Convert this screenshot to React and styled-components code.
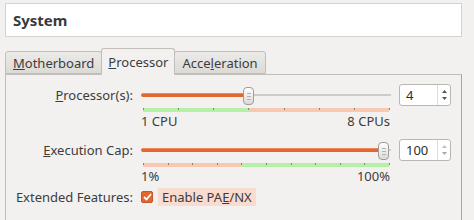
import React from 'react';
import styled, { createGlobalStyle } from 'styled-components';

const GlobalStyle = createGlobalStyle`
    body {
        margin: 0;
        background: #f2f1f0;
        font-family: "Noto Sans", "Open Sans", sans-serif;
        font-size: 13px;
        color: #3c3c3c;
        overflow: hidden;
    }
`;

const Page = styled.div`
    width: 457px;
    padding: 3px 0 0 5px;
`;

const TitleBox = styled.div`
    height: 32px;
    display: flex;
    align-items: center;
    padding-left: 7px;
    background: #ffffff;
    border: 1px solid #d4d2ce;
    font-size: 15px;
    font-weight: bold;
    color: #3a3a3a;
`;

const TabBar = styled.div`
    display: flex;
    align-items: flex-end;
    height: 27px;
    margin-top: 10px;
    position: relative;
    z-index: 1;
`;

const Tab = styled.div`
    height: ${(p) => (p.$active ? '27px' : '23px')};
    display: flex;
    align-items: center;
    padding: 0 ${(p) => (p.$active ? '6px' : '7px')};
    box-sizing: border-box;
    border: 1px solid #c2bfba;
    border-bottom: ${(p) => (p.$active ? '1px solid #f2f1f0' : '1px solid #c2bfba')};
    border-radius: 3px 3px 0 0;
    background: ${(p) => (p.$active ? '#f2f1f0' : 'linear-gradient(#ecebe9, #dcdad6)')};
    margin-right: -1px;
    margin-bottom: ${(p) => (p.$active ? '-1px' : '0')};
    color: #3c3c3c;
`;

const Panel = styled.div`
    border: 1px solid #c2bfba;
    border-right-color: #a9a6a1;
    border-bottom: none;
    height: 147px;
    box-sizing: border-box;
    padding-top: 9px;
    display: grid;
    grid-template-columns: 127px 250px 52px;
    column-gap: 8px;
    align-content: start;
`;

const Label = styled.div`
    text-align: right;
    height: 22px;
    line-height: 22px;
    white-space: nowrap;
`;

const SliderCol = styled.div`
    display: flex;
    flex-direction: column;
    margin-bottom: ${(p) => p.$gap}px;
`;

const TrackRow = styled.div`
    position: relative;
    height: 22px;
    display: flex;
    align-items: center;
`;

const Filled = styled.div`
    height: 3px;
    border-radius: 2px;
    background: #e4662f;
    border-top: 1px solid #ec8a5e;
`;

const Empty = styled.div`
    flex: 1;
    height: 2px;
    background: #cfccc8;
`;

const Handle = styled.div`
    position: absolute;
    top: 3px;
    width: 9px;
    height: 16px;
    margin-left: -5px;
    border: 1px solid #9f9d99;
    border-radius: 4px;
    background: linear-gradient(#ffffff, #dcdad6);
    display: flex;
    flex-direction: column;
    align-items: center;
    justify-content: center;
    gap: 2px;
    & > span {
        width: 4px;
        height: 1px;
        background: #b5b2ad;
    }
`;

const Scale = styled.div`
    position: relative;
    height: 4px;
    margin: 2px 2px 0 2px;
    display: flex;
`;

const ScalePart = styled.div`
    background: ${(p) => (p.$good ? '#b6f0a6' : '#f8c8b3')};
`;

const Tick = styled.div`
    position: absolute;
    top: 0;
    width: 1px;
    height: 2px;
    background: #7d8a72;
`;

const ScaleText = styled.div`
    display: flex;
    justify-content: space-between;
    line-height: 15px;
    margin-top: 2px;
    padding-right: 1px;
`;

const SpinBox = styled.div`
    height: 22px;
    box-sizing: border-box;
    border: 1px solid #bab7b2;
    border-radius: 3px;
    background: #fff;
    display: flex;
`;

const SpinValue = styled.div`
    flex: 1;
    padding-left: 6px;
    line-height: 20px;
    color: #2e2e2e;
`;

const SpinArrows = styled.div`
    width: 13px;
    border-left: 1px solid #dedcd8;
    display: flex;
    flex-direction: column;
    align-items: center;
    justify-content: space-between;
    padding: 5px 0;
    box-sizing: border-box;
    & svg {
        display: block;
    }
`;

const Check = styled.div`
    display: flex;
    align-items: center;
    gap: 5px;
    height: 22px;
`;

const CheckBox = styled.div`
    width: 12px;
    height: 12px;
    border-radius: 2px;
    background: #e4662f;
    border: 1px solid #c9552a;
    box-sizing: border-box;
    display: flex;
    align-items: center;
    justify-content: center;
`;

const CheckText = styled.span`
    background: #f9dbcf;
    padding: 1px 4px;
    line-height: 16px;
    white-space: nowrap;
`;

const Slider = ({ value, ticks, split, greenFirst, min, max, gap }) => {
    const pos = 236 * value + 6;
    return (
        <SliderCol $gap={gap}>
            <TrackRow>
                <Filled style={{ width: pos }} />
                <Empty />
                <Handle style={{ left: pos }}>
                    <span />
                    <span />
                    <span />
                </Handle>
            </TrackRow>
            <Scale>
                <ScalePart $good={greenFirst} style={{ width: `${split * 100}%` }} />
                <ScalePart $good={!greenFirst} style={{ flex: 1 }} />
                {Array.from({ length: ticks }).map((_, i) => (
                    <Tick key={i} style={{ left: `${(i / (ticks - 1)) * 100}%` }} />
                ))}
            </Scale>
            <ScaleText>
                <span>{min}</span>
                <span>{max}</span>
            </ScaleText>
        </SliderCol>
    );
};

const Spin = ({ value, atMax }) => (
    <SpinBox>
        <SpinValue>{value}</SpinValue>
        <SpinArrows>
            <svg width="5" height="3" viewBox="0 0 5 3">
                <path d="M0 3 L2.5 0 L5 3 Z" fill={atMax ? '#c4c1bc' : '#555'} />
            </svg>
            <svg width="5" height="3" viewBox="0 0 5 3">
                <path d="M0 0 L2.5 3 L5 0 Z" fill={atMax ? '#a9a6a1' : '#555'} />
            </svg>
        </SpinArrows>
    </SpinBox>
);

const App = () => (
    <Page>
        <GlobalStyle />
        <TitleBox>System</TitleBox>
        <TabBar>
            <Tab><span><u>M</u>otherboard</span></Tab>
            <Tab $active><span><u>P</u>rocessor</span></Tab>
            <Tab><span>Acce<u>l</u>eration</span></Tab>
        </TabBar>
        <Panel>
            <Label><u>P</u>rocessor(s):</Label>
            <Slider value={0.43} ticks={8} split={0.43} greenFirst min="1 CPU" max="8 CPUs" gap={10} />
            <Spin value="4" />

            <Label><u>E</u>xecution Cap:</Label>
            <Slider value={1} ticks={11} split={0.4} greenFirst={false} min="1%" max="100%" gap={2} />
            <Spin value="100" atMax />

            <Label>Extended Features:</Label>
            <Check>
                <CheckBox>
                    <svg width="9" height="8" viewBox="0 0 9 8">
                        <path d="M1 4 L3.5 6.5 L8 1" stroke="#fff" strokeWidth="1.8" fill="none" />
                    </svg>
                </CheckBox>
                <CheckText>Enable PA<u>E</u>/NX</CheckText>
            </Check>
            <div />
        </Panel>
    </Page>
);

export default App;
